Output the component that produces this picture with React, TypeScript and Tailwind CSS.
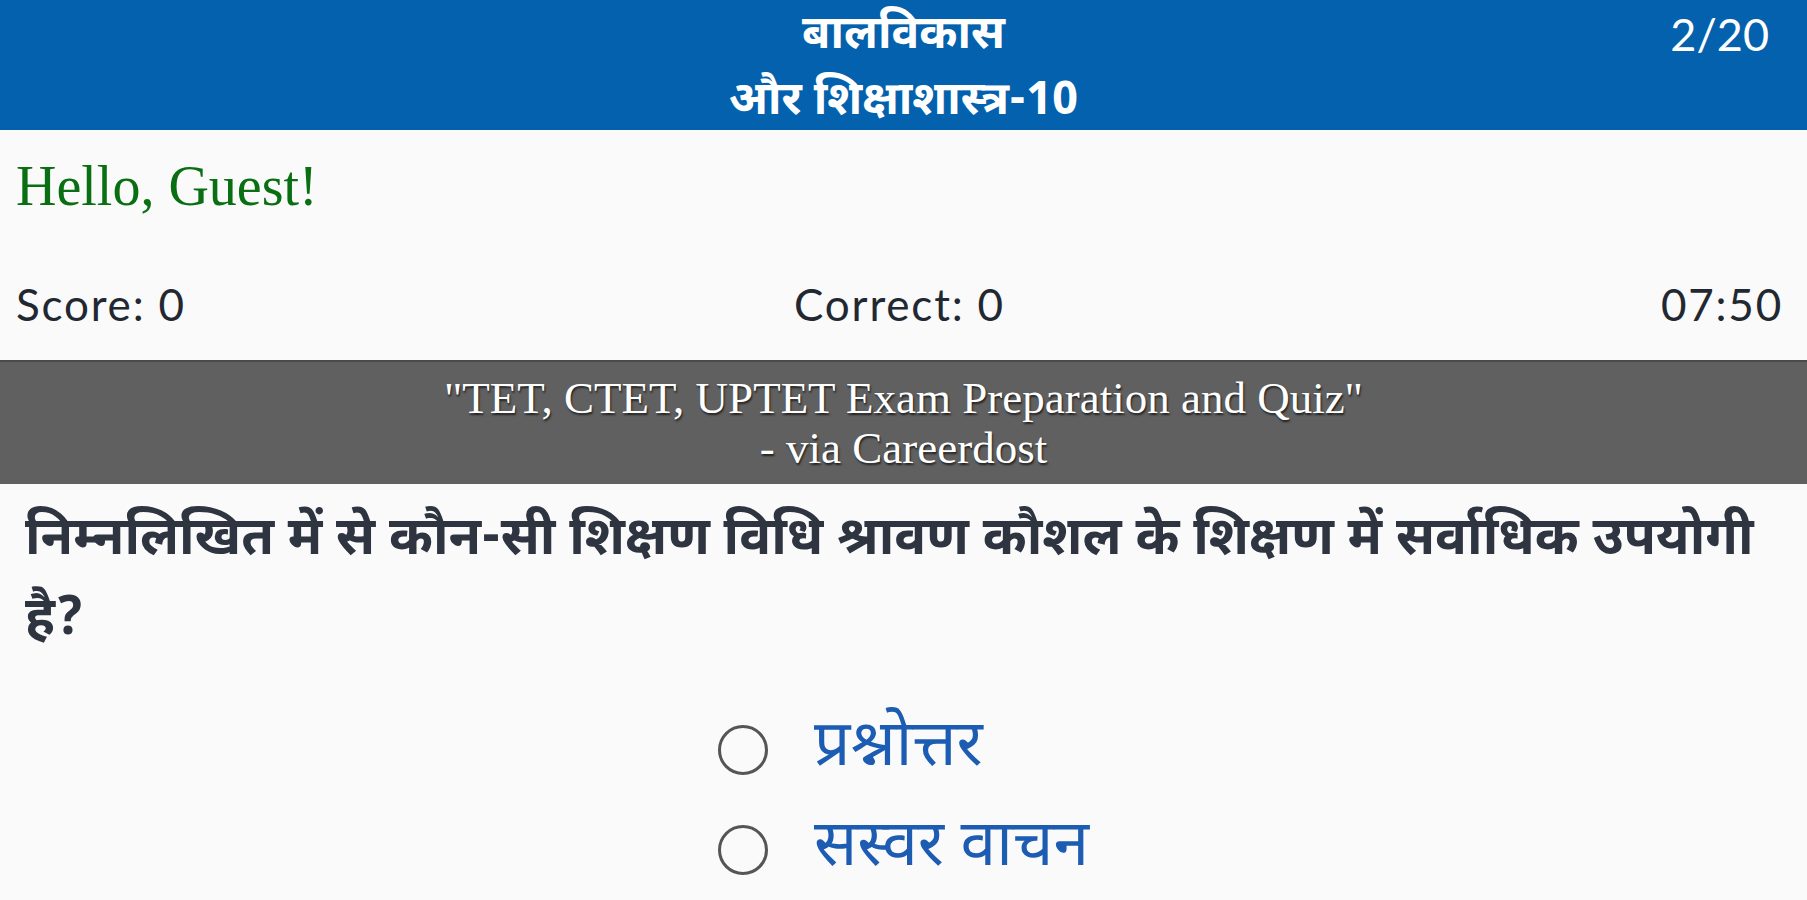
import React from "react";

const deva = '"Noto Sans Devanagari", "Lohit Devanagari", "Mukta", "Hind", "Noto Sans", sans-serif';

export default function App() {
  return (
    <div className="w-full h-[900px] overflow-hidden bg-[#fafafa]">
      {/* Header */}
      <header className="h-[130px] bg-[#0461ad] grid grid-cols-[1fr_auto_1fr] text-white">
        <div />
        <div
          className="flex flex-col items-center justify-center pt-[4px] font-bold text-[46px] leading-[66px] whitespace-nowrap"
          style={{ fontFamily: deva }}
        >
          <span>बालविकास</span>
          <span>और शिक्षाशास्त्र-10</span>
        </div>
        <div className="flex justify-end items-start pr-[38px] pt-[8px]">
          <span className="font-['Lato',sans-serif] text-[45px] leading-[52px]">2/20</span>
        </div>
      </header>

      {/* Greeting */}
      <div className="pl-[16px] pt-[28px] font-['Liberation_Serif',serif] text-[56px] leading-none text-[#0a6f12]">
        Hello, Guest!
      </div>

      {/* Stats */}
      <div className="grid grid-cols-3 pl-[16px] pr-[24px] mt-[68px] font-['Lato',sans-serif] text-[44px] leading-none tracking-[1.8px] text-[#222831]">
        <span>Score: 0</span>
        <span className="text-center">Correct: 0</span>
        <span className="text-right">07:50</span>
      </div>

      {/* Banner */}
      <div className="mt-[34px] h-[124px] bg-[#606060] border-t-2 border-[#4a4a4a] flex flex-col items-center justify-center text-white font-['Liberation_Serif',serif] text-[45px] leading-[50px] [text-shadow:1px_2px_2px_#222]">
        <span>"TET, CTET, UPTET Exam Preparation and Quiz"</span>
        <span>- via Careerdost</span>
      </div>

      {/* Question */}
      <div
        className="pl-[25px] pr-[8px] pt-[18px] font-bold text-[53px] leading-[80px] text-[#2e3440]"
        style={{ fontFamily: deva }}
      >
        निम्नलिखित में से कौन-सी शिक्षण विधि श्रावण कौशल के शिक्षण में सर्वाधिक उपयोगी है?
      </div>

      {/* Options */}
      <div className="flex justify-center mt-[53px]">
        <div className="flex flex-col gap-[30px]" style={{ fontFamily: deva }}>
          {["प्रश्नोत्तर", "सस्वर वाचन"].map((o) => (
            <label key={o} className="flex items-center gap-[46px] text-[64px] leading-[70px] text-[#1c5cb3]">
              <span className="w-[50px] h-[50px] rounded-full border-[3px] border-[#555] shrink-0" />
              <span>{o}</span>
            </label>
          ))}
        </div>
      </div>
    </div>
  );
}
